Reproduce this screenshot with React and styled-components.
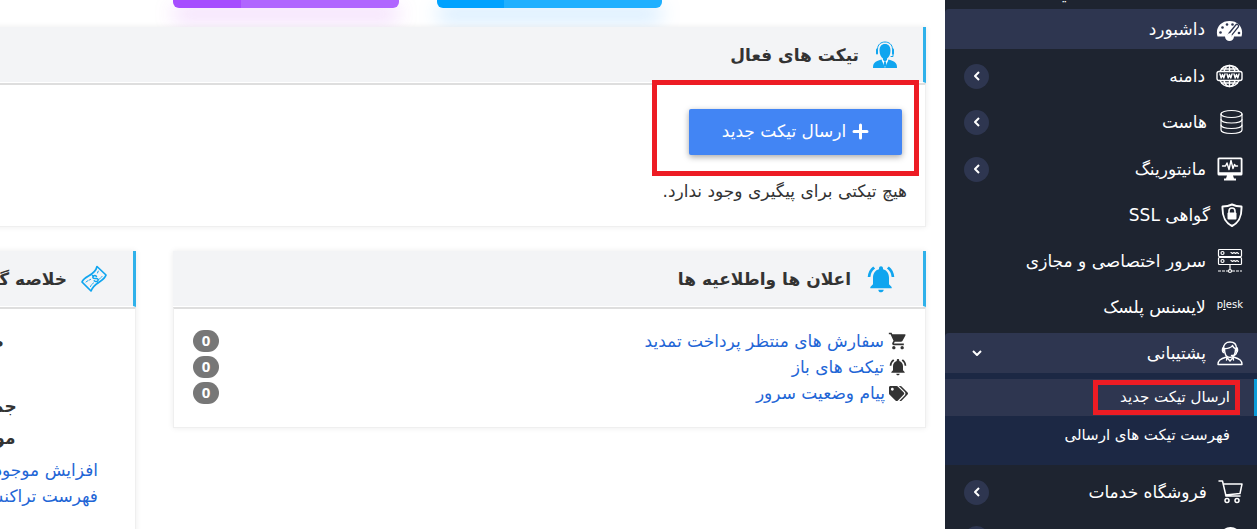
import styled, { createGlobalStyle } from 'styled-components';
import { MdNotificationsActive, MdShoppingCart } from 'react-icons/md';
import { FaTags } from 'react-icons/fa';

const line = { fill: 'none', stroke: 'currentColor', strokeLinecap: 'round', strokeLinejoin: 'round' };

const GaugeIcon = () => (
  <svg width="27" height="26" viewBox="0 0 27 26">
    <path fill="currentColor" d="M1.500 20.500C-1 12 4.500 5 13.500 5S28 12 25.500 20.500H18a4.500 4.500 0 0 1-9 0z" />
    <g fill="#2e3650">
      <circle cx="4.500" cy="16.500" r="1.300" />
      <circle cx="6.500" cy="11.500" r="1.300" />
      <circle cx="11" cy="8.500" r="1.300" />
      <circle cx="16.500" cy="8.500" r="1.300" />
      <circle cx="23" cy="17" r="1.300" />
    </g>
    <path {...line} stroke="#2e3650" strokeWidth="4.500" d="M14 18.500 21 10" />
    <path {...line} strokeWidth="2" d="M13.500 19.500 21 10" />
    <circle cx="13.500" cy="19.500" r="2.300" fill="currentColor" />
  </svg>
);

const WwwIcon = () => (
  <svg width="27" height="26" viewBox="0 0 27 26">
    <g {...line} strokeWidth="1.400">
      <path d="M4 8.500C6 4.500 9.500 2.500 13.500 2.500s7.500 2 9.500 6M4 17.500c2 4 5.500 6 9.500 6s7.500-2 9.500-6" />
      <path d="M13.500 2.500v6M13.500 17.500v6M8 8.500c1-3.500 3-6 5.500-6s4.500 2.500 5.500 6M8 17.500c1 3.500 3 6 5.500 6s4.500-2.500 5.500-6M5.500 6h16M5.500 20h16" />
      <rect x="1" y="8.500" width="25" height="9" rx="2" />
      <path d="m4 11 1.200 4 1.300-3.500 1.300 3.500L9 11M11 11l1.200 4 1.300-3.500 1.300 3.500 1.200-4M18 11l1.200 4 1.300-3.500 1.300 3.500 1.200-4" />
    </g>
  </svg>
);

const DatabaseIcon = () => (
  <svg width="25" height="26" viewBox="0 0 25 26">
    <g {...line} strokeWidth="1.200">
      <ellipse cx="13.500" cy="5" rx="10.500" ry="3.500" />
      <path d="M3 5v16c0 2 4.500 3.500 10.500 3.500S24 23 24 21V5" />
      <path d="M3 10.500C3 12.500 7.500 14 13.500 14S24 12.500 24 10.500M3 16c0 2 4.500 3.500 10.500 3.500S24 18 24 16" />
    </g>
  </svg>
);

const MonitorIcon = () => (
  <svg width="26" height="26" viewBox="0 0 26 26">
    <path
      fill="currentColor"
      fillRule="evenodd"
      d="M2 1.500h22a1.500 1.500 0 0 1 1.500 1.500v15a1.500 1.500 0 0 1-1.500 1.500h-8l1 3H19v2H7v-2h2l1-3H2A1.500 1.500 0 0 1 .5 18V3A1.500 1.500 0 0 1 2 1.500zM2.300 3.300v13h21.400v-13z"
    />
    <path {...line} strokeWidth="1.400" d="M5.500 10h3l1.500-3 2 6.500 2-9 2 8 1.500-4 1 1.500h2" />
  </svg>
);

const ShieldIcon = () => (
  <svg width="22" height="26" viewBox="0 0 22 26">
    <path {...line} strokeWidth="2" d="M11 2.500c3 1.500 6.500 2 9.500 2 .3 9-1.500 15.500-9.500 19.500C3 20 1.200 13.500 1.500 4.500c3 0 6.500-.5 9.500-2z" />
    <path {...line} strokeWidth="1.600" d="M8 11V9a3 3 0 0 1 6 0v2" />
    <rect x="6.500" y="10.500" width="9" height="7" rx="1" fill="currentColor" />
  </svg>
);

const ServerIcon = () => (
  <svg width="26" height="26" viewBox="0 0 26 26">
    <g {...line} strokeWidth="1.200">
      <rect x="1.500" y="1.500" width="23" height="7" rx="1" />
      <rect x="1.500" y="9.500" width="23" height="7" rx="1" />
      <circle cx="5.500" cy="5" r="1.500" />
      <circle cx="5.500" cy="13" r="1.500" />
      <path d="m14 4.500 1.500 1L17 4.500l1.500 1 1.500-1 1.500 1M14 12.500l1.500 1 1.500-1 1.500 1 1.500-1 1.500 1M13 17v4" />
      <path strokeDasharray="3 1" strokeLinecap="butt" d="M1 23h10M15 23h10" />
      <circle cx="13" cy="23" r="1.500" />
    </g>
  </svg>
);

const SupportIcon = () => (
  <svg width="26" height="26" viewBox="0 0 26 26">
    <g {...line} strokeWidth="1.400">
      <path d="M6.500 11V8.500C6.500 4.500 9 2 13 2s6.500 2.500 6.500 6.500V11" />
      <path d="M7.500 8.500c3 .5 7-1 8-3 .5 2 2 3 3.500 3.500M7.500 9c0 5 2 8.500 5.500 8.500s5.500-3.500 5.500-8.500" />
      <path d="M6.500 7.500C5 8 5 12 6.500 12.500M19.500 7.500C21 8 21 12 19.500 12.500c0 2-2 3-5 3" />
      <path d="M1 24.500c0-4 2-5.500 8.500-7.500l3.500 4 3.500-4c6.500 2 8.500 3.500 8.500 7.500zM10 17l-.5 3M16 17l.5 3" />
    </g>
  </svg>
);

const CartIcon = () => (
  <svg width="25" height="26" viewBox="0 0 25 26">
    <g {...line} strokeWidth="1.500">
      <path d="M1 2h3.500L8 17h14M5 5h19l-2 9.500L7.500 16" />
      <circle cx="9" cy="21.500" r="2" />
      <circle cx="19" cy="21.500" r="2" />
    </g>
  </svg>
);

const PowerIcon = () => (
  <svg width="25" height="26" viewBox="0 0 25 26">
    <circle {...line} strokeWidth="2" cx="12.500" cy="13" r="10" />
  </svg>
);

const AgentIcon = () => (
  <svg width="24" height="28" viewBox="0 0 24 28">
    <g fill="currentColor">
      <path d="M12 3c3.600 0 5.500 2.500 5.500 6.500 0 4-1.500 6.500-3.500 8v2.500h-4v-2.500c-2-1.500-3.500-4-3.500-8C6.500 5.500 8.400 3 12 3z" />
      <path d="M0 27c0-5 1.500-6.500 8.500-8.500L12 27l3.500-8.500C22.500 20.500 24 22 24 27z" />
      <rect x="3" y="7.500" width="2" height="6" rx="1" />
      <rect x="19" y="7.500" width="2" height="6" rx="1" />
    </g>
    <path fill="#fff" d="m9 18.500 3 2 3-2-3 8z" />
    <path fill="currentColor" d="m11.200 20.500.8-.5.8.5.7 3.500-1.500 2.500-1.500-2.500z" />
    <path {...line} strokeWidth="1" d="M4.500 8C4.500 3.500 8 1 12 1s7.500 2.500 7.500 7M20 13v2.500h-2" />
  </svg>
);

const MoneyIcon = () => (
  <svg width="26" height="28" viewBox="0 0 26 28">
    <g {...line} strokeWidth="1.700">
      <path d="M1 17c2.500-6.500 13-6 15-15.500l9 8.500C23 17 13 17 10 26z" />
      <path strokeWidth="1.500" d="M15.500 11.500c-1.500-1.800-4.500-.5-3.500 1.300s4.200-.3 5 1.500-2 3.200-3.800 1.500M11.500 10.500l1 1M16 16.500l1 1" />
      <path strokeWidth="1" strokeDasharray="2 1.500" d="M5 17c2.500-2 4-2 6-3.500M16.500 8 17.500 5.500M21 11.500c-1 1.500-2 2-3.500 3M9.500 21.500c1-2 2-3 3-3.500" />
    </g>
  </svg>
);

const PlusIcon = () => (
  <svg width="17" height="17" viewBox="0 0 17 17">
    <path {...line} strokeWidth="3" d="M8.500 2v13M2 8.500h13" />
  </svg>
);

const Chevron = ({ down }) => (
  <svg width="10" height="10" viewBox="0 0 10 10">
    <path {...line} strokeLinecap="butt" strokeWidth="2" d={down ? 'M1 3l4 4 4-4' : 'M7 1 3 5l4 4'} />
  </svg>
);

const PleskMark = () => (
  <Plesk>
    p<u>l</u>esk
  </Plesk>
);

const menuGroups = [
  [{ label: 'داشبورد', icon: <GaugeIcon />, active: true }],
  [
    { label: 'دامنه', icon: <WwwIcon />, more: true },
    { label: 'هاست', icon: <DatabaseIcon />, more: true },
  ],
  [
    { label: 'مانیتورینگ', icon: <MonitorIcon />, more: true },
    { label: 'گواهی SSL', icon: <ShieldIcon /> },
    { label: 'سرور اختصاصی و مجازی', icon: <ServerIcon /> },
    { label: 'لایسنس پلسک', icon: <PleskMark /> },
    {
      label: 'پشتیبانی',
      icon: <SupportIcon />,
      active: true,
      children: ['ارسال تیکت جدید', 'فهرست تیکت های ارسالی'],
    },
  ],
  [
    { label: 'فروشگاه خدمات', icon: <CartIcon />, more: true },
    { label: '', icon: <PowerIcon />, more: true },
  ],
];

const notices = [
  { label: 'سفارش های منتظر پرداخت تمدید', icon: <MdShoppingCart size={20} />, count: 0 },
  { label: 'تیکت های باز', icon: <MdNotificationsActive size={20} />, count: 0 },
  { label: 'پیام وضعیت سرور', icon: <FaTags size={19} />, count: 0 },
];

const MenuItem = ({ item }) => (
  <li>
    <MenuLink href="#" $active={item.active}>
      {item.icon}
      <span>{item.label}</span>
      {item.more && (
        <Toggle>
          <Chevron />
        </Toggle>
      )}
      {item.children && (
        <Toggle $open>
          <Chevron down />
        </Toggle>
      )}
    </MenuLink>
    {item.children && (
      <SubMenu>
        {item.children.map((child, i) => (
          <li key={child}>
            <SubLink href="#" $active={i === 0}>
              {i === 0 ? <Marked>{child}</Marked> : child}
            </SubLink>
          </li>
        ))}
      </SubMenu>
    )}
  </li>
);

const App = () => (
  <>
    <GlobalStyle />
    <Page>
      <Sidebar>
        <Profile>سعید</Profile>
        {menuGroups.map((group, i) => (
          <MenuGroup key={i}>
            {group.map((item, j) => (
              <MenuItem key={j} item={item} />
            ))}
          </MenuGroup>
        ))}
      </Sidebar>
      <Main>
        <Tiles>
          <TileGlow $glow="rgba(255, 120, 60, 0.2)" />
          <Tile $color="#00a2ff" $light="#1fb0ff" $glow="rgba(0, 140, 255, 0.35)" />
          <Tile $color="#a64dff" $light="#b066ff" $glow="rgba(190, 60, 240, 0.35)" />
          <TileGlow $glow="rgba(0, 200, 150, 0.2)" />
        </Tiles>
        <Panel $bleed>
          <PanelHeader>
            <AgentIcon />
            <h3>تیکت های فعال</h3>
          </PanelHeader>
          <TicketBody>
            <Highlight>
              <NewTicket type="button">
                <PlusIcon />
                ارسال تیکت جدید
              </NewTicket>
            </Highlight>
            <p>هیچ تیکتی برای پیگیری وجود ندارد.</p>
          </TicketBody>
        </Panel>
        <Columns>
          <Panel>
            <PanelHeader>
              <MdNotificationsActive size={32} />
              <h3>اعلان ها واطلاعیه ها</h3>
            </PanelHeader>
            <NoticeBody>
              <ul>
                {notices.map(n => (
                  <Notice key={n.label}>
                    {n.icon}
                    <a href="#">{n.label}</a>
                    <Badge>{n.count}</Badge>
                  </Notice>
                ))}
              </ul>
            </NoticeBody>
          </Panel>
          <Panel>
            <PanelHeader>
              <MoneyIcon />
              <h3>خلاصه گزارش مالی</h3>
            </PanelHeader>
            <SummaryBody>
              <Totals>
                <dt>صورتحساب های</dt>
                <dd />
                <dt>جمع صورتحساب ها</dt>
                <dt>موجودی حساب من</dt>
              </Totals>
              <a href="#">افزایش موجودی</a>
              <a href="#">فهرست تراکنش ها</a>
            </SummaryBody>
          </Panel>
        </Columns>
      </Main>
    </Page>
  </>
);

const GlobalStyle = createGlobalStyle`
  * {
    box-sizing: border-box;
  }
  body {
    margin: 0;
    background: #fff;
    color: #333;
    font: 17px/26px "DejaVu Sans", sans-serif;
  }
  h3, p, ul, dl, dt, dd {
    margin: 0;
    padding: 0;
  }
  ul {
    list-style: none;
  }
  a {
    color: #1f66d6;
    text-decoration: none;
  }
  svg {
    flex: none;
  }
`;

const Page = styled.div`
  display: flex;
  direction: rtl;
  height: 100vh;
  overflow: hidden;
`;

const Sidebar = styled.nav`
  display: flex;
  flex-direction: column;
  flex: none;
  gap: 7px;
  width: 312px;
  background: #1e2430;
  color: #fff;
`;

const Profile = styled.div`
  display: flex;
  align-items: flex-end;
  justify-content: center;
  flex: none;
  height: 2px;
  padding-right: 60px;
  line-height: 16px;
`;

const MenuGroup = styled.ul`
  display: flex;
  flex-direction: column;
  gap: 6px;
`;

const MenuLink = styled.a`
  display: flex;
  align-items: center;
  gap: 11px;
  height: 40px;
  padding: 0 14px 0 19px;
  border-radius: 4px 0 0;
  background: ${({ $active }) => ($active ? '#2e3650' : 'transparent')};
  color: #fff;
  white-space: nowrap;
`;

const Toggle = styled.span`
  display: flex;
  align-items: center;
  justify-content: center;
  width: 25px;
  height: 25px;
  margin-right: auto;
  border-radius: 50%;
  background: ${({ $open }) => ($open ? 'transparent' : '#2e3650')};
`;

const Plesk = styled.span`
  direction: ltr;
  padding-bottom: 4px;
  font-size: 10px;
  line-height: 12px;
`;

const SubMenu = styled.ul`
  padding: 6px 0 12px;
  background: #1c2844;
`;

const SubLink = styled.a`
  display: flex;
  align-items: center;
  height: 37px;
  padding-right: ${({ $active }) => ($active ? '14px' : '27px')};
  border-right: ${({ $active }) => ($active ? '3px solid #0a9bd8' : '0')};
  background: ${({ $active }) => ($active ? '#2e3650' : 'transparent')};
  color: #fff;
  font-size: 15px;
`;

const Marked = styled.span`
  padding: 0 5px 0 22px;
  border: 5px solid #ed1c24;
  line-height: 25px;
`;

const Main = styled.main`
  display: flex;
  flex-direction: column;
  flex: 1;
  min-width: 0;
  padding-right: 19px;
  overflow: hidden;
`;

const Tiles = styled.div`
  display: grid;
  grid-template-columns: repeat(4, 1fr);
  gap: 38px;
  flex: none;
  height: 8px;
  margin: 0 0 19px -91px;
`;

const Tile = styled.div`
  border-radius: 0 0 6px 6px;
  background: linear-gradient(to right, ${({ $color, $light }) => `${$color} 30%, ${$light} 30%`});
  box-shadow: 0 10px 20px ${({ $glow }) => $glow};
`;

const TileGlow = styled.div`
  height: 0;
  box-shadow: 0 0 10px ${({ $glow }) => $glow};
`;

const Panel = styled.section`
  flex: none;
  min-width: 0;
  margin-left: ${({ $bleed }) => ($bleed ? '-91px' : '0')};
  background: #fff;
  box-shadow: 0 0 6px rgba(0, 0, 0, 0.08);
  white-space: nowrap;
`;

const PanelHeader = styled.header`
  display: flex;
  align-items: center;
  gap: 14px;
  height: 56px;
  padding-right: 26px;
  border-right: 3px solid #2fb1ea;
  border-bottom: 1px solid #fff;
  background: #f3f4f6;
  color: #10a5ef;
  h3 {
    color: #333;
    font-size: 17px;
    line-height: 26px;
  }
`;

const PanelBody = styled.div`
  border: 1px solid #efefef;
  border-width: 2px 1px 1px;
  border-top-color: #dedede;
`;

const TicketBody = styled(PanelBody)`
  padding-bottom: 22px;
  p {
    margin: 2px 18px 0 0;
  }
`;

const Highlight = styled.div`
  position: relative;
  width: max-content;
  margin: -5px 6px 0 0;
  padding: 24px 12px 16px 32px;
  border: 5px solid #ed1c24;
`;

const NewTicket = styled.button`
  display: flex;
  align-items: center;
  justify-content: center;
  gap: 6px;
  width: 213px;
  height: 46px;
  padding: 0 0 2px;
  border: 0;
  border-radius: 2px;
  background: #4285f4;
  box-shadow: 0 2px 6px rgba(0, 0, 0, 0.35);
  color: #fff;
  font: inherit;
  cursor: pointer;
`;

const Columns = styled.div`
  display: grid;
  grid-template-columns: 1fr 400px;
  align-items: start;
  gap: 37px;
  margin: 24px 0 0 -264px;
`;

const NoticeBody = styled(PanelBody)`
  padding: 19px 17px 21px 19px;
`;

const Notice = styled.li`
  display: flex;
  align-items: center;
  gap: 4px;
  height: 26px;
`;

const Badge = styled.span`
  width: 26px;
  height: 22px;
  margin-right: auto;
  border-radius: 11px;
  background: #777;
  color: #fff;
  font: bold 15px/20px "Open Sans", sans-serif;
  text-align: center;
`;

const SummaryBody = styled(PanelBody)`
  display: flex;
  flex-direction: column;
  padding: 19px 37px 60px;
`;

const Totals = styled.dl`
  display: flex;
  flex-direction: column;
  gap: 6px;
  padding-bottom: 6px;
  font-weight: bold;
  text-align: center;
  dd {
    height: 27px;
  }
`;

export default App;
